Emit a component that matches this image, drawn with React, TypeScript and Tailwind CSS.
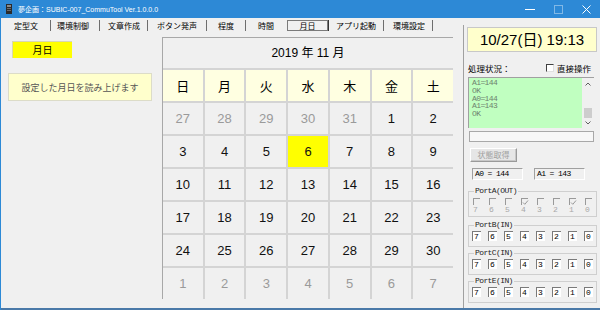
import React from "react";

const cal: number[][] = [
  [27, 28, 29, 30, 31, 1, 2],
  [3, 4, 5, 6, 7, 8, 9],
  [10, 11, 12, 13, 14, 15, 16],
  [17, 18, 19, 20, 21, 22, 23],
  [24, 25, 26, 27, 28, 29, 30],
  [1, 2, 3, 4, 5, 6, 7],
];
const week = ["日", "月", "火", "水", "木", "金", "土"];
const bits = ["7", "6", "5", "4", "3", "2", "1", "0"];

function Sep({ className }: { className: string }) {
  return <div className={"w-px h-[11px] bg-[#6e6e6e] shrink-0 " + className} />;
}

function Group({ label, className, children }: { label: string; className: string; children: React.ReactNode }) {
  return (
    <fieldset className={"ml-[1px] w-[129px] border border-[#cfcfcf] px-[3px] " + className}>
      <legend className="ml-[2px] px-[1px] font-['Liberation_Mono',monospace] text-[8px] leading-[8px] tracking-[-0.6px] text-[#222]">
        {label}
      </legend>
      {children}
    </fieldset>
  );
}

function PortRow() {
  return (
    <div className="flex gap-[7px]">
      {bits.map((b) => (
        <div
          key={b}
          className="w-[9px] h-[10px] bg-white border-t border-l border-[#7a7a7a] flex items-center pl-[1px] font-['Liberation_Mono',monospace] text-[8px] leading-[8px] text-black"
        >
          {b}
        </div>
      ))}
    </div>
  );
}

export default function App() {
  return (
    <div className="w-[600px] h-[310px] bg-[#f0f0f0] flex flex-col overflow-hidden border-l border-[#2d89d6] font-['Noto_Sans_CJK_JP',sans-serif]">
      {/* title bar */}
      <div className="h-[18px] shrink-0 bg-[#2d89d6] flex items-center">
        <svg width="6" height="10" viewBox="0 0 6 10" className="ml-[5px] shrink-0">
          <rect x="0" y="0" width="6" height="10" fill="#2b2b2b" />
          <rect x="1" y="1" width="4" height="2" fill="#8a8a8a" />
          <rect x="1" y="4" width="4" height="1" fill="#6a6a6a" />
          <rect x="1" y="6" width="4" height="1" fill="#6a6a6a" />
        </svg>
        <span className="ml-[6px] text-white text-[7px] leading-[9px] font-['Liberation_Sans','Noto_Sans_CJK_JP',sans-serif] whitespace-nowrap">
          夢企画：SUBIC-007_CommuTool Ver.1.0.0.0
        </span>
        <div className="ml-auto flex h-full">
          <div className="w-[28px] h-full flex items-center justify-center">
            <svg width="10" height="10" viewBox="0 0 10 10">
              <line x1="0" y1="5.5" x2="10" y2="5.5" stroke="white" strokeWidth="1" />
            </svg>
          </div>
          <div className="w-[28px] h-full flex items-center justify-center">
            <svg width="9" height="9" viewBox="0 0 9 9">
              <rect x="0.5" y="0.5" width="8" height="8" fill="none" stroke="white" strokeOpacity="0.4" strokeWidth="1" />
            </svg>
          </div>
          <div className="w-[28px] h-full flex items-center justify-center">
            <svg width="9" height="9" viewBox="0 0 9 9">
              <line x1="0.5" y1="0.5" x2="8.5" y2="8.5" stroke="white" strokeWidth="1" />
              <line x1="8.5" y1="0.5" x2="0.5" y2="8.5" stroke="white" strokeWidth="1" />
            </svg>
          </div>
        </div>
      </div>

      <div className="flex-1 flex min-h-0">
        {/* left part */}
        <div className="w-[461px] flex flex-col">
          {/* tab bar */}
          <div className="h-[15px] shrink-0 flex items-center text-[8px] leading-[10px] text-black whitespace-nowrap">
            <span className="ml-[13px]">定型文</span>
            <Sep className="ml-[12px]" />
            <span className="ml-[6px]">環境制御</span>
            <Sep className="ml-[10px]" />
            <span className="ml-[8px]">文章作成</span>
            <Sep className="ml-[7px]" />
            <span className="ml-[9px]">ボタン発声</span>
            <Sep className="ml-[9px]" />
            <span className="ml-[11px]">程度</span>
            <Sep className="ml-[11px]" />
            <span className="ml-[12px]">時間</span>
            <div className="ml-[13px] w-[41px] h-[11px] border border-[#7a7a7a] flex items-center justify-center">
              月日
            </div>
            <Sep className="ml-0 bg-[#333]" />
            <span className="ml-[7px]">アプリ起動</span>
            <Sep className="ml-[7px]" />
            <span className="ml-[9px]">環境設定</span>
            <Sep className="ml-[7px]" />
          </div>

          <div className="flex flex-1 min-h-0">
            {/* left column */}
            <div className="w-[161px] flex flex-col">
              <div className="ml-[11px] mt-[8px] w-[60px] h-[17px] bg-[#ffff00] border-t border-l border-[#d8d8b0] flex items-center justify-center text-[10px] leading-[12px] text-black">
                月日
              </div>
              <div className="ml-[7px] mt-[15px] w-[144px] h-[28px] bg-[#ffffcc] border border-[#dcdcc8] flex items-center justify-center text-[9px] leading-[11px] text-[#555]">
                設定した月日を読み上げます
              </div>
            </div>

            {/* calendar */}
            <div className="mt-[4px] w-[291px] h-[262px] flex flex-col border-l border-t border-[#a8a8a8] bg-[#d4d4d4]">
              <div className="h-[30px] shrink-0 bg-[#f0f0f0] flex items-center justify-center text-[12px] leading-[14px] text-black font-['Liberation_Sans','Noto_Sans_CJK_JP',sans-serif] whitespace-pre">
                2019 年 11 月
              </div>
              <div className="mt-[2px] grid grid-cols-7 grid-rows-[31px_repeat(6,31px)] gap-[2px]">
                {week.map((w) => (
                  <div key={w} className="bg-[#ffffe1] flex items-center justify-center text-[13px] leading-[15px] text-black">
                    {w}
                  </div>
                ))}
                {cal.map((row, ri) =>
                  row.map((d, ci) => {
                    const gray = (ri === 0 && ci < 5) || ri === 5;
                    const sel = ri === 1 && ci === 3;
                    return (
                      <div
                        key={ri + "-" + ci}
                        className={
                          "flex items-center justify-center text-[13px] leading-[15px] font-['Liberation_Sans',sans-serif] " +
                          (sel ? "bg-[#ffff00] " : "bg-[#f0f0f0] ") +
                          (gray ? "text-[#9a9a9a]" : "text-[#111]")
                        }
                      >
                        {d}
                      </div>
                    );
                  })
                )}
              </div>
            </div>
          </div>
        </div>

        {/* right panel */}
        <div className="w-[138px] flex flex-col">
          <div className="mt-[7px] ml-[1px] flex-1 border-l border-[#a0a0a0] pl-[3px] pt-[2px] flex flex-col">
            <div className="w-[130px] h-[25px] shrink-0 bg-[#ffffcc] border border-[#c8c8c8] flex items-center justify-center text-[15px] leading-[17px] text-black font-['Liberation_Sans','Noto_Sans_CJK_JP',sans-serif] whitespace-pre">
              10/27(日) 19:13
            </div>

            <div className="mt-[10px] h-[11px] flex items-center text-[8.5px] leading-[10px] text-black">
              <span className="ml-[1px] w-[78px]">処理状況：</span>
              <div className="w-[8px] h-[8px] bg-white border-t border-l border-[#404040] border-r border-b border-r-[#e0e0e0] border-b-[#e0e0e0]" />
              <span className="ml-[3px]">直接操作</span>
            </div>

            <div className="mt-[4px] ml-[1px] w-[126px] h-[51px] shrink-0 flex border-t border-l border-[#a0a0a0] bg-[#c0ffc0]">
              <div className="flex-1 pl-[3px] pt-[1px] font-['Liberation_Mono',monospace] text-[8px] leading-[7.8px] tracking-[-0.6px] text-[#6f826f]">
                <div>A1=144</div>
                <div>OK</div>
                <div>A0=144</div>
                <div>A1=143</div>
                <div>OK</div>
              </div>
              <div className="w-[12px] bg-[#f0f0f0] flex flex-col items-center">
                <svg width="8" height="8" viewBox="0 0 8 8" className="mt-[2px]">
                  <polyline points="1.5,5.5 4,3 6.5,5.5" fill="none" stroke="#606060" strokeWidth="1" />
                </svg>
                <div className="mt-[20px] w-[8px] h-[10px] bg-[#cdcdcd]" />
                <svg width="8" height="8" viewBox="0 0 8 8" className="mt-[1px]">
                  <polyline points="1.5,2.5 4,5 6.5,2.5" fill="none" stroke="#606060" strokeWidth="1" />
                </svg>
              </div>
            </div>

            <div className="mt-[3px] ml-[2px] w-[125px] h-[11px] shrink-0 bg-[#f7f7f7] border border-[#a8a8a8]" />

            <div className="mt-[6px] ml-[3px] w-[47px] h-[14px] shrink-0 bg-[#e6e6e6] border-t border-l border-white border-r border-b border-r-[#9a9a9a] border-b-[#9a9a9a] shadow-[inset_-1px_-1px_0_#c8c8c8] flex items-center justify-center text-[8px] leading-[10px] text-[#a0a0a0]">
              状態取得
            </div>

            <div className="mt-[6px] ml-[5px] flex gap-[11px] shrink-0">
              <div className="w-[51px] h-[12px] border-t border-l border-[#a0a0a0] border-r border-b border-r-white border-b-white pl-[2px] flex items-center font-['Liberation_Mono',monospace] text-[8px] leading-[8px] tracking-[-0.6px] text-black whitespace-pre">
                A0 = 144
              </div>
              <div className="w-[51px] h-[12px] border-t border-l border-[#a0a0a0] border-r border-b border-r-white border-b-white pl-[2px] flex items-center font-['Liberation_Mono',monospace] text-[8px] leading-[8px] tracking-[-0.6px] text-black whitespace-pre">
                A1 = 143
              </div>
            </div>

            <Group label="PortA(OUT)" className="mt-[7px]">
              <div className="pt-[3px] pb-[2px] pl-[1px]">
                <div className="flex gap-[9px]">
                  {bits.map((b) => (
                    <div key={b} className="w-[7px] h-[7px] border-t border-l border-[#9a9a9a] relative">
                      {(b === "4" || b === "1") && (
                        <svg width="7" height="7" viewBox="0 0 7 7" className="absolute left-0 top-0">
                          <polyline points="1,3.5 2.8,5.3 6,1.5" fill="none" stroke="#9a9a9a" strokeWidth="1" />
                        </svg>
                      )}
                    </div>
                  ))}
                </div>
                <div className="mt-[1px] flex gap-[9px]">
                  {bits.map((b) => (
                    <div key={b} className="w-[7px] h-[8px] font-['Liberation_Mono',monospace] text-[8px] leading-[8px] text-[#a8a8a8]">
                      {b}
                    </div>
                  ))}
                </div>
              </div>
            </Group>

            <Group label="PortB(IN)" className="mt-[4px]">
              <div className="pt-[2px] pb-[5px]">
                <PortRow />
              </div>
            </Group>

            <Group label="PortC(IN)" className="mt-[2px]">
              <div className="pt-[2px] pb-[5px]">
                <PortRow />
              </div>
            </Group>

            <Group label="PortE(IN)" className="mt-[2px]">
              <div className="pt-[2px] pb-[5px]">
                <PortRow />
              </div>
            </Group>
          </div>
        </div>
      </div>
      <div className="h-[2px] shrink-0 bg-[#4a79a8]" />
    </div>
  );
}
